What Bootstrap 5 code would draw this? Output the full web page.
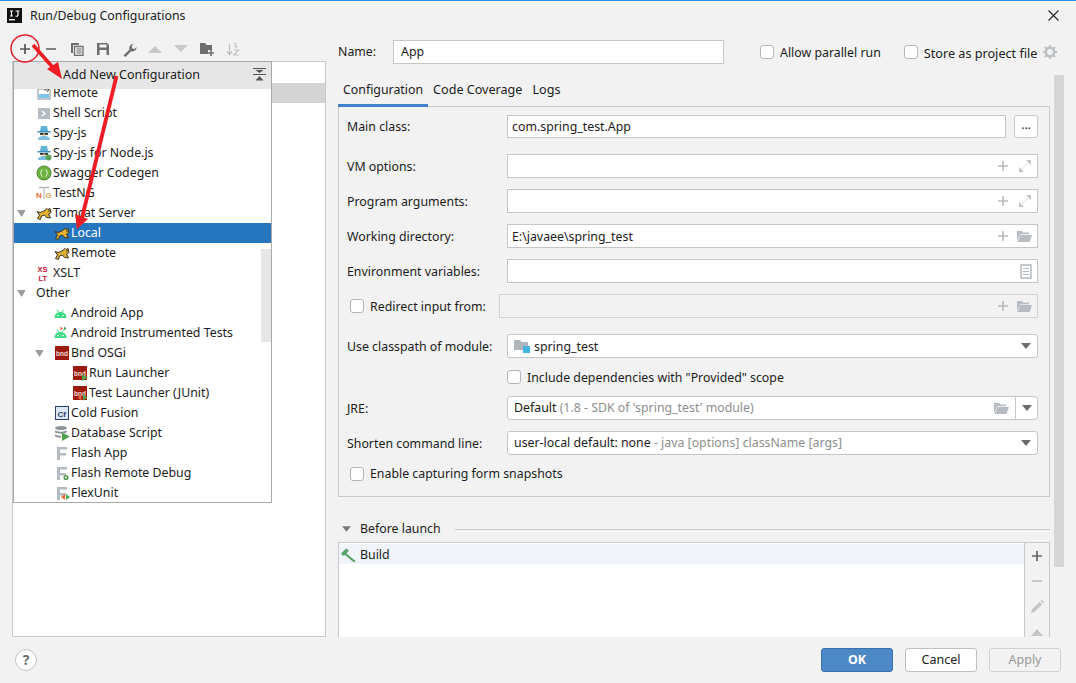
<!DOCTYPE html>
<html lang="en">
<head>
<meta charset="utf-8">
<title>Run/Debug Configurations</title>
<link href="https://cdn.jsdelivr.net/npm/bootstrap@5.3.0/dist/css/bootstrap.min.css" rel="stylesheet">
<style>
html,body{margin:0;height:100%;}
body{background:#f2f2f2;font-family:"Noto Sans","Open Sans",sans-serif;font-size:12.35px;line-height:16px;color:#1c1c1c;overflow:hidden;}
.dlg{width:1076px;height:683px;position:relative;overflow:hidden;border-top:1px solid #2b8fe0;}
.titlebar{height:29px;padding-left:7px;gap:8px;}
.closex{margin-left:auto;margin-right:17px;}
.mainarea{height:607px;}
.leftcol{width:338px;flex:none;padding-left:12px;padding-right:12px;}
.tbar{height:31px;padding-top:10px;}
.tb{width:26px;height:18px;flex:none;display:flex;align-items:center;justify-content:center;}
.treebox{height:576px;width:314px;background:#fff;border:1px solid #c9c9c9;position:relative;}
.ghost-sel{height:20px;margin-top:21px;background:#d4d4d4;}
.popup{position:absolute;left:0;top:-1px;width:259px;height:442px;background:#fff;border:1px solid #a8a8a8;overflow:hidden;z-index:2;}
.pophead{height:27px;background:#e6e6e6;padding-left:49px;padding-right:5px;padding-bottom:2px;position:relative;z-index:1;font-size:12.5px;}
.treelist{margin-top:-6px;}
.trow{height:20px;white-space:nowrap;}
.trow.sel{background:#2675bf;color:#fff;}
.tw{width:22px;flex:none;padding-left:3px;display:flex;align-items:center;}
.ind1{padding-left:18px;}
.ind2{padding-left:36px;}
.ico{width:16px;height:16px;flex:none;margin-right:1px;}
.popscroll{position:absolute;right:0;top:187px;width:10px;height:93px;background:#e6e6e6;}
.rightcol{width:738px;flex:none;overflow:hidden;}
.namerow{height:24px;margin-top:10px;margin-bottom:11px;}
.nm{width:55px;}
.fld{background:#fff;border:1px solid #c6c6c6;height:24px;padding:0 5px 0 4px;white-space:nowrap;}
.namefld{width:331px;margin-right:36px;padding-left:7px;}
.ck{width:14px!important;height:14px!important;margin:0 6px 0 0!important;border:1px solid #b4b4b4;border-radius:2px;flex:none;background-color:#fff;}
.storeck{margin-left:23px!important;}
.storetx{font-size:12.65px;}
.gearic{margin-left:6px;}
.cfg{width:712px;flex:none;}
.scrollbar{width:10px;height:492px;margin-left:4px;background:#d6d6d6;flex:none;}
.tabsx{height:31px;padding-left:5px;gap:10px;}
.tabx{height:31px;position:relative;padding-top:7px;font-size:12.6px;}
.tabx.on{font-size:12.35px;}
.tabx.on::after{content:"";position:absolute;left:-5px;right:-5px;bottom:-1px;height:3px;background:#4083c9;z-index:1;}
.cfgbox{height:391px;border:1px solid #c9c9c9;padding:8px 11px 0 8px;}
.frow{height:24px;margin-bottom:11px;}
.frow.mainrow{height:23px;margin-bottom:16px;}
.frow.mainrow .fld{height:23px;}
.frow.wide{margin-bottom:16px;}
.frow.gap16{margin-bottom:8px;}
.lbl{width:160px;flex:none;}
.lbl2{width:152px;flex:none;}
.dn{padding-top:2px;}
.pl3x{padding-left:3px;}
.pv6{padding-left:6px;}
.round{border-radius:3px;}
.dis{background:#f2f2f2;border-color:#d2d2d2;}
.dots{width:24px;height:23px;margin-left:8px;background:#fff;border:1px solid #c6c6c6;border-radius:3px;padding:0 0 5px;flex:none;font-size:12px;line-height:14px;color:#1c1c1c;}
.fic{margin-left:auto;}
.fic2{margin-left:7px;}
.fic3{margin-left:9px;}
.greytx{color:#8e8e8e;}
.dd{margin-left:auto;margin-right:1px;}
.inc{height:22px;margin-left:160px;margin-bottom:8px;}
.sep{border-left:1px solid #c6c6c6;width:22px;height:24px;margin-right:-5px;margin-left:6px;flex:none;}
.blhead{height:20px;margin-top:21px;margin-bottom:4px;padding-left:4px;gap:9px;}
.blline{flex:1;height:1px;background:#c9c9c9;margin-left:5px;}
.bllist{height:120px;background:#fff;border:1px solid #c9c9c9;border-bottom:0;padding-top:1px;}
.blitems{flex:1;}
.blrow{height:20px;background:#f0f3f8;padding-left:1px;gap:4px;}
.bltools{width:25px;margin-top:-1px;flex:none;background:#f2f2f2;border-left:1px solid #c9c9c9;}
.blt{height:25.5px;}
.footerbar{height:46px;padding:0 15px;}
.help{width:22px;height:22px;border:1px solid #c4c4c4;border-radius:50%;background:#fff;color:#6e6e6e;font-weight:700;font-size:14px;line-height:20px;text-align:center;padding:0;}
.fb{width:72px;height:24px;padding:0;font-size:12.5px;line-height:20px;border-radius:3px;margin-left:12px;font-family:inherit;}
.fbok{background:#4d88c7;border:1px solid #3b72ad;color:#fff;font-weight:700;}
.fbcancel{background:#fff;border:1px solid #bfbfbf;color:#1c1c1c;}
.fbapply{background:#f2f2f2;border:1px solid #d0d0d0;color:#999;}
.marks{position:absolute;left:0;top:-1px;width:1076px;height:683px;z-index:5;pointer-events:none;}
.hidesvg{position:absolute;width:0;height:0;}
</style>
</head>
<body>
<svg class="hidesvg" aria-hidden="true">
<defs>
<symbol id="tomcat" viewBox="0 0 16 16"><path d="M1 6.500l3 1 4-1.500 3-2.500 1 1 2-1 1 4-2.500 1.500 2 4-4-.5-2-2.500-3 1-1 3.500-3-1 2-3.500z" fill="#e0b030" stroke="#37342a" stroke-width="1"/><circle cx="13" cy="6" r=".7" fill="#222"/></symbol>
<symbol id="tri" viewBox="0 0 8 8"><path d="M0 1h9L4.500 8z" fill="#9c9c9c"/></symbol>
<symbol id="bnd" viewBox="0 0 16 16"><rect x="1" y="1" width="14" height="14" fill="#9c1a0c"/><text x="8" y="10.500" text-anchor="middle" font-family="Liberation Sans" font-size="6.500" font-weight="700" fill="#f2dcd9">bnd</text></symbol>
<symbol id="android" viewBox="1.500 0 16 16"><path d="M2 13c0-4 2.500-6 6-6s6 2 6 6z" fill="#3ddc84"/><path d="M4.500 4.500l2 2.500M11.500 4.500l-2 2.500" stroke="#3ddc84" stroke-width="1"/><circle cx="5.500" cy="10.500" r=".8" fill="#fff"/><circle cx="10.500" cy="10.500" r=".8" fill="#fff"/></symbol>
<symbol id="flashf" viewBox="0 0 16 16"><path d="M3 2h10v2.500H6v3.500h6v2.500H6V15H3z" fill="#b3bac0"/></symbol>
<symbol id="spy" viewBox="0 0 16 16"><path d="M4 6l1-5h6l1 5z" fill="#5eb1d8"/><rect x="1.500" y="6" width="13" height="1.500" fill="#3d8fb8"/><path d="M4 8h8v2l-4 1-4-1z" fill="#f0cfa6"/><rect x="4" y="8" width="3.500" height="1.800" fill="#333"/><rect x="8.500" y="8" width="3.500" height="1.800" fill="#333"/><path d="M2 15c0-3 2-4 6-4s6 1 6 4z" fill="#7cc0e0"/></symbol>
<symbol id="plusg" viewBox="0 0 12 12"><path d="M6 1v10M1 6h10" stroke="#b6babd" stroke-width="1.600"/></symbol>
<symbol id="expand" viewBox="0 0 14 14"><path d="M8 1h5v5zM1 8v5h5z" fill="#c0c4c7"/><path d="M10 4L4 10" stroke="#dcdee0" stroke-width="1"/></symbol>
<symbol id="foldero" viewBox="0 0 16 14"><path d="M1 2h5l1 1.500h6v1.800H4.500L1 12z" fill="#b6bcc1"/><path d="M4.500 6H16l-2.500 7H1.500z" fill="#b6bcc1"/></symbol>
<symbol id="ddt" viewBox="0 0 10 6"><path d="M0 0h10L5 6z" fill="#6c6c6c"/></symbol>
</defs>
</svg>
<div class="dlg d-flex flex-column">
  <div class="titlebar d-flex align-items-center">
    <svg width="15" height="15" viewBox="0 0 15 15"><rect width="15" height="15" fill="#111"/><rect x="2" y="11" width="6" height="1.400" fill="#fff"/><path d="M3 3h3M4.500 3v5M3 8h3M8.500 3h4M11 3v4c0 1.200-1.200 1.500-2.500 1" stroke="#fff" stroke-width="1.200" fill="none"/></svg>
    <span>Run/Debug Configurations</span>
    <svg class="closex" width="11" height="11" viewBox="0 0 11 11"><path d="M.5.500l10 10M10.500.500l-10 10" stroke="#222" stroke-width="1.100"/></svg>
  </div>
  <div class="mainarea d-flex">
    <div class="leftcol">
      <div class="tbar d-flex">
        <div class="tb"><svg width="12" height="12" viewBox="0 0 12 12"><path d="M6 1v10M1 6h10" stroke="#555" stroke-width="1.700"/></svg></div>
        <div class="tb"><svg width="12" height="12" viewBox="0 0 12 12"><path d="M1 6h10" stroke="#6e6e6e" stroke-width="1.700"/></svg></div>
        <div class="tb"><svg width="14" height="14" viewBox="0 0 14 14"><path d="M1 1h8v2H3v8H1z" fill="#6e6e6e"/><path d="M4.500 4.500h8.500v9H4.500z" fill="none" stroke="#6e6e6e" stroke-width="1.300"/><path d="M6.500 7h5M6.500 9h5M6.500 11h5" stroke="#6e6e6e"/></svg></div>
        <div class="tb"><svg width="14" height="14" viewBox="0 0 14 14"><path d="M1 1h10l2 2v10H1z" fill="#6e6e6e"/><rect x="3.500" y="2.500" width="7" height="3" fill="#f2f2f2"/><rect x="3.500" y="8" width="7" height="5" fill="#f2f2f2"/></svg></div>
        <div class="tb"><svg width="15" height="15" viewBox="0 0 15 15"><path d="M1.500 13.500l6-6c-.8-2.300.6-5.500 4-5.500l-2 2.500 1 2 2 .5 2-2c.3 3-2.700 5-5.500 4.200l-5.500 5.800z" fill="#6e6e6e"/></svg></div>
        <div class="tb"><svg width="14" height="8" viewBox="0 0 14 8"><path d="M0 8L7 1l7 7z" fill="#c8c8c8"/></svg></div>
        <div class="tb"><svg width="14" height="8" viewBox="0 0 14 8"><path d="M0 0l7 7 7-7z" fill="#c8c8c8"/></svg></div>
        <div class="tb"><svg width="15" height="14" viewBox="0 0 15 14"><path d="M0 1h5l1.500 2H12v5H8v4H0z" fill="#6e6e6e"/><path d="M11 8v6M8 11h6" stroke="#6e6e6e" stroke-width="1.600"/></svg></div>
        <div class="tb"><svg width="15" height="14" viewBox="0 0 15 14"><path d="M3.500 2v10M1 9.500l2.500 3 2.500-3" stroke="#c4c4c4" stroke-width="1.300" fill="none"/><path d="M8 1.500h1.500L10.500 6M8.500 4.500h1.500M8 8h4.500L8 13h5" stroke="#c4c4c4" stroke-width="1.200" fill="none"/></svg></div>
      </div>
      <div class="treebox">
        <div class="ghost-sel"></div>
        <div class="popup">
          <div class="pophead d-flex align-items-center justify-content-between">
            <span>Add New Configuration</span>
            <svg width="13" height="13" viewBox="0 0 13 13"><path d="M0 .5h13M0 6.500h13" stroke="#555" stroke-width="1"/><path d="M2.500 2h8L6.500 5zM2.500 12.500h8L6.500 8z" fill="#555"/></svg>
          </div>
          <div class="treelist">
            <div class="trow d-flex align-items-center"><span class="tw"></span><svg class="ico" viewBox="0 0 16 16"><rect x="2" y="4" width="12" height="10" fill="none" stroke="#a0a8ae" stroke-width="1.300"/><rect x="3" y="9" width="10" height="4" fill="#7cc4e8"/><path d="M8 5h5M11 3l2 2-2 2" stroke="#6e6e6e" fill="none"/></svg><span>Remote</span></div>
            <div class="trow d-flex align-items-center"><span class="tw"></span><svg class="ico" viewBox="0 0 16 16"><rect x="2" y="3" width="12" height="11" fill="#b5bcc1"/><path d="M6 6l3 2.500-3 2.500" stroke="#fff" stroke-width="1.500" fill="none"/></svg><span>Shell Script</span></div>
            <div class="trow d-flex align-items-center"><span class="tw"></span><svg class="ico"><use href="#spy"/></svg><span>Spy-js</span></div>
            <div class="trow d-flex align-items-center"><span class="tw"></span><svg class="ico" viewBox="0 0 16 16"><use href="#spy" width="16" height="16"/><circle cx="12.500" cy="12.500" r="3" fill="#5ba55b"/></svg><span>Spy-js for Node.js</span></div>
            <div class="trow d-flex align-items-center"><span class="tw"></span><svg class="ico" viewBox="0 0 16 16"><circle cx="8" cy="8" r="7" fill="#6cb33f" stroke="#4a7d2e"/><path d="M6.500 4.500c-1.500 0-.8 2.500-2 3.500 1.200 1 .5 3.500 2 3.500M9.500 4.500c1.500 0 .8 2.500 2 3.500-1.200 1-.5 3.500-2 3.500" stroke="#e6f2dc" fill="none"/></svg><span>Swagger Codegen</span></div>
            <div class="trow d-flex align-items-center"><span class="tw"></span><svg class="ico" viewBox="0 0 16 16"><path d="M3 2.500h10" stroke="#b0b0b0" stroke-width="1.500"/><path d="M8 2v12" stroke="#c4c4c4" stroke-width="1.500"/><text x="0" y="13" font-family="Liberation Sans" font-size="8" font-weight="700" fill="#ea6a2c">N</text><text x="9.500" y="13" font-family="Liberation Sans" font-size="8" font-weight="700" fill="#e0a050">G</text></svg><span>TestNG</span></div>
            <div class="trow d-flex align-items-center"><span class="tw"><svg width="8" height="8"><use href="#tri"/></svg></span><svg class="ico"><use href="#tomcat"/></svg><span>Tomcat Server</span></div>
            <div class="trow sel d-flex align-items-center ind1"><span class="tw"></span><svg class="ico"><use href="#tomcat"/></svg><span>Local</span></div>
            <div class="trow d-flex align-items-center ind1"><span class="tw"></span><svg class="ico"><use href="#tomcat"/></svg><span>Remote</span></div>
            <div class="trow d-flex align-items-center"><span class="tw"></span><svg class="ico" viewBox="0 0 16 16"><text x="1.500" y="6.500" font-family="Liberation Sans" font-size="7.500" font-weight="700" fill="#c8102e">XS</text><text x="2.500" y="15.500" font-family="Liberation Sans" font-size="7.500" font-weight="700" fill="#c8102e">LT</text></svg><span>XSLT</span></div>
            <div class="trow d-flex align-items-center"><span class="tw"><svg width="8" height="8"><use href="#tri"/></svg></span><span>Other</span></div>
            <div class="trow d-flex align-items-center ind1"><span class="tw"></span><svg class="ico"><use href="#android"/></svg><span>Android App</span></div>
            <div class="trow d-flex align-items-center ind1"><span class="tw"></span><svg class="ico" viewBox="0 0 16 16"><use href="#android" width="16" height="16"/><path d="M9 3.500L6.500 1.500v4z" fill="#e8663c"/><path d="M10 1.500v4l2.500-2z" fill="#4fa04f"/></svg><span>Android Instrumented Tests</span></div>
            <div class="trow d-flex align-items-center ind1"><span class="tw"><svg width="8" height="8"><use href="#tri"/></svg></span><svg class="ico"><use href="#bnd"/></svg><span>Bnd OSGi</span></div>
            <div class="trow d-flex align-items-center ind2"><span class="tw"></span><svg class="ico" viewBox="0 0 16 16"><use href="#bnd" width="16" height="16"/><path d="M10 9l6 3.500-6 3.500z" fill="#4fa04f"/></svg><span>Run Launcher</span></div>
            <div class="trow d-flex align-items-center ind2"><span class="tw"></span><svg class="ico" viewBox="0 0 16 16"><use href="#bnd" width="16" height="16"/><path d="M9.500 9.500l-4 3 4 3z" fill="#e8663c"/><path d="M11 9.500l4.500 3-4.500 3z" fill="#4fa04f"/></svg><span>Test Launcher (JUnit)</span></div>
            <div class="trow d-flex align-items-center ind1"><span class="tw"></span><svg class="ico" viewBox="0 0 16 16"><rect x="1.500" y="1.500" width="13" height="13" fill="#dde6f5" stroke="#2a3f66"/><text x="3.500" y="11.500" font-family="Liberation Sans" font-size="8" font-weight="700" fill="#2a3f66">Cf</text></svg><span>Cold Fusion</span></div>
            <div class="trow d-flex align-items-center ind1"><span class="tw"></span><svg class="ico" viewBox="0 0 16 16"><ellipse cx="7" cy="3" rx="6" ry="2" fill="#8e9499"/><path d="M1 5.500c3 1.500 9 1.500 12 0v2c-3 1.500-9 1.500-12 0zM1 9.500c2 1 4 1.300 6 1.300v2c-2 0-4-.3-6-1.300z" fill="#8e9499"/><path d="M8 7.500l8 4-8 4.500z" fill="#4fa04f"/></svg><span>Database Script</span></div>
            <div class="trow d-flex align-items-center ind1"><span class="tw"></span><svg class="ico"><use href="#flashf"/></svg><span>Flash App</span></div>
            <div class="trow d-flex align-items-center ind1"><span class="tw"></span><svg class="ico" viewBox="0 0 16 16"><use href="#flashf" width="16" height="16"/><circle cx="12" cy="12.500" r="2.600" fill="#4e9a4e"/><circle cx="12" cy="12.500" r="1" fill="#fff"/></svg><span>Flash Remote Debug</span></div>
            <div class="trow d-flex align-items-center ind1"><span class="tw"></span><svg class="ico" viewBox="0 0 16 16"><use href="#flashf" width="16" height="16"/><path d="M11 9l-4 3 4 3z" fill="#e8663c"/><path d="M12 9l4 3-4 3z" fill="#4fa04f"/></svg><span>FlexUnit</span></div>
          </div>
          <div class="popscroll"></div>
        </div>
      </div>
    </div>
    <div class="rightcol">
      <div class="namerow d-flex align-items-center">
        <span class="nm">Name:</span>
        <div class="fld namefld d-flex align-items-center">App</div>
        <input class="form-check-input ck" type="checkbox" aria-label="Allow parallel run">
        <span class="dn">Allow parallel run</span>
        <input class="form-check-input ck storeck" type="checkbox" aria-label="Store as project file">
        <span class="dn storetx">Store as project file</span>
        <svg class="gearic" width="14" height="15" viewBox="0 0 14 15"><circle cx="7" cy="7" r="4.200" fill="none" stroke="#bcc0c3" stroke-width="2.600"/><path d="M7 0v2.500M7 11.500V14M0 7h2.500M11.500 7H14M2 2l2 2M10 10l2 2M12 2l-2 2M4 10l-2 2" stroke="#bcc0c3" stroke-width="1.800"/></svg>
      </div>
      <div class="d-flex">
        <div class="cfg">
          <div class="tabsx d-flex">
            <div class="tabx on">Configuration</div>
            <div class="tabx">Code Coverage</div>
            <div class="tabx">Logs</div>
          </div>
          <div class="cfgbox">
            <div class="frow mainrow d-flex align-items-center"><span class="lbl">Main class:</span><div class="fld flex-grow-1 d-flex align-items-center">com.spring_test.App</div><button type="button" class="btn dots d-flex align-items-end justify-content-center">...</button></div>
            <div class="frow d-flex align-items-center"><span class="lbl dn">VM options:</span><div class="fld flex-grow-1 d-flex align-items-center"><svg class="fic" width="12" height="12"><use href="#plusg"/></svg><svg class="fic3" width="14" height="14"><use href="#expand"/></svg></div></div>
            <div class="frow d-flex align-items-center"><span class="lbl dn">Program arguments:</span><div class="fld flex-grow-1 d-flex align-items-center"><svg class="fic" width="12" height="12"><use href="#plusg"/></svg><svg class="fic3" width="14" height="14"><use href="#expand"/></svg></div></div>
            <div class="frow d-flex align-items-center"><span class="lbl dn">Working directory:</span><div class="fld flex-grow-1 d-flex align-items-center"><span class="dn">E:\javaee\spring_test</span><svg class="fic" width="12" height="12"><use href="#plusg"/></svg><svg class="fic2" width="16" height="14"><use href="#foldero"/></svg></div></div>
            <div class="frow d-flex align-items-center"><span class="lbl dn">Environment variables:</span><div class="fld flex-grow-1 d-flex align-items-center"><svg class="fic" width="12" height="15" viewBox="0 0 12 15"><rect x="1" y="1" width="10" height="13" fill="none" stroke="#b6babd" stroke-width="1.500"/><path d="M3 4.500h6M3 7.500h6M3 10.500h6" stroke="#b6babd"/></svg></div></div>
            <div class="frow wide d-flex align-items-center"><span class="lbl2 d-flex align-items-center pl3x"><input class="form-check-input ck" type="checkbox" aria-label="Redirect input from"><span class="dn">Redirect input from:</span></span><div class="fld dis flex-grow-1 d-flex align-items-center"><svg class="fic" width="12" height="12"><use href="#plusg"/></svg><svg class="fic2" width="16" height="14"><use href="#foldero"/></svg></div></div>
            <div class="frow gap16 d-flex align-items-center"><span class="lbl dn">Use classpath of module:</span><div class="fld round pv6 flex-grow-1 d-flex align-items-center"><svg width="16" height="14" viewBox="0 0 16 14" class="me-1"><path d="M0 1h6l1.500 2H14v8H0z" fill="#aeb6bc"/><rect x="9" y="7" width="7" height="7" fill="#40b6e0"/></svg><span class="dn">spring_test</span><svg class="dd" width="10" height="6"><use href="#ddt"/></svg></div></div>
            <div class="inc d-flex align-items-center"><input class="form-check-input ck" type="checkbox" aria-label="Include dependencies"><span class="dn">Include dependencies with "Provided" scope</span></div>
            <div class="frow d-flex align-items-center"><span class="lbl dn">JRE:</span><div class="fld round pv6 flex-grow-1 d-flex align-items-center"><span>Default <span class="greytx">(1.8 - SDK of 'spring_test' module)</span></span><svg class="fic" width="16" height="14"><use href="#foldero"/></svg><span class="sep d-flex align-items-center justify-content-center"><svg width="10" height="6"><use href="#ddt"/></svg></span></div></div>
            <div class="frow d-flex align-items-center"><span class="lbl dn">Shorten command line:</span><div class="fld round pv6 flex-grow-1 d-flex align-items-center"><span>user-local default: none <span class="greytx">- java [options] className [args]</span></span><svg class="dd" width="10" height="6"><use href="#ddt"/></svg></div></div>
            <div class="d-flex align-items-center pl3x"><input class="form-check-input ck" type="checkbox" aria-label="Enable capturing form snapshots"><span>Enable capturing form snapshots</span></div>
          </div>
          <div class="blhead dn d-flex align-items-center"><svg width="9" height="6" viewBox="0 0 10 6"><path d="M0 0h10L5 6z" fill="#7a7a7a"/></svg><span>Before launch</span><span class="blline"></span></div>
          <div class="bllist d-flex">
            <div class="blitems"><div class="blrow dn d-flex align-items-center"><svg width="16" height="16" viewBox="0 0 16 16"><path d="M1 6.500L6 1.500l3 2-2.500 3L15.500 14 14 15.500 5 8 3.500 9z" fill="#5aa469"/></svg><span>Build</span></div></div>
            <div class="bltools d-flex flex-column align-items-center">
              <div class="blt d-flex align-items-center"><svg width="12" height="12" viewBox="0 0 12 12"><path d="M6 1v10M1 6h10" stroke="#666" stroke-width="1.700"/></svg></div>
              <div class="blt d-flex align-items-center"><svg width="12" height="12" viewBox="0 0 12 12"><path d="M1 6h10" stroke="#c4c4c4" stroke-width="1.700"/></svg></div>
              <div class="blt d-flex align-items-center"><svg width="14" height="14" viewBox="0 0 14 14"><path d="M1 13l.8-3.500L9.500 2 12 4.500 4.500 12zM10.500 1l2.500 2.500 1-1.300L11.800 0z" fill="#c4c4c4"/></svg></div>
              <div class="blt d-flex align-items-center"><svg width="12" height="8" viewBox="0 0 12 8"><path d="M0 8l6-7 6 7z" fill="#c4c4c4"/></svg></div>
            </div>
          </div>
        </div>
        <div class="scrollbar"></div>
      </div>
    </div>
  </div>
  <div class="footerbar d-flex align-items-center">
    <button type="button" class="btn help">?</button>
    <div class="ms-auto d-flex">
      <button type="button" class="btn fb fbok">OK</button>
      <button type="button" class="btn fb fbcancel">Cancel</button>
      <button type="button" class="btn fb fbapply">Apply</button>
    </div>
  </div>
  <svg class="marks" viewBox="0 0 1076 683" aria-hidden="true">
    <ellipse cx="25" cy="48.500" rx="14" ry="13.500" fill="none" stroke="#e8202a" stroke-width="1.500"/>
    <path d="M33 45L56 71" stroke="#ee1c25" stroke-width="3.600"/>
    <path d="M62 79L47 69 58 62z" fill="#ee1c25"/>
    <path d="M116.500 76L82 218" stroke="#ee1c25" stroke-width="3.800"/>
    <path d="M77 229L75 214 88 219z" fill="#ee1c25"/>
  </svg>
</div>
</body>
</html>
